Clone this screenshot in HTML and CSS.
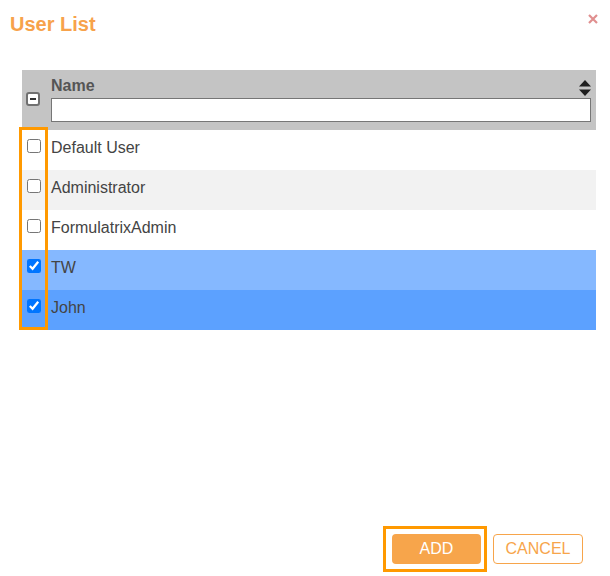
FILE: index.html
```html
<!DOCTYPE html>
<html lang="en">
<head>
    <meta charset="UTF-8">
    <meta name="viewport" content="width=device-width, initial-scale=1.0">
    <title>User List</title>
    <link rel="stylesheet" href="styles.css">
</head>
<body>

<div class="dialog">
    <header class="dialog-header">
        <h1>User List</h1>
        <button class="close-button" aria-label="Close">
            <svg width="10" height="10" viewBox="0 0 10 10">
                <path d="M1 1 L9 9 M9 1 L1 9" stroke="#e08f8f" stroke-width="2.2" fill="none"/>
            </svg>
        </button>
    </header>

    <div class="user-table">
        <div class="table-head">
            <div class="check-cell">
                <span class="fake-check"></span>
            </div>
            <div class="name-head">
                <div class="name-title">
                    <span>Name</span>
                    <svg width="12" height="16" viewBox="0 0 12 16">
                        <path d="M6 0 L12 6.5 L0 6.5 Z M0 9.5 L12 9.5 L6 16 Z" fill="#1f1f1f"/>
                    </svg>
                </div>
                <input class="name-filter" type="text">
            </div>
        </div>

        <div class="table-row">
            <div class="check-cell"><input type="checkbox"></div>
            <div class="name-cell">Default User</div>
        </div>
        <div class="table-row alt">
            <div class="check-cell"><input type="checkbox"></div>
            <div class="name-cell">Administrator</div>
        </div>
        <div class="table-row">
            <div class="check-cell"><input type="checkbox"></div>
            <div class="name-cell">FormulatrixAdmin</div>
        </div>
        <div class="table-row selected">
            <div class="check-cell"><input type="checkbox" checked></div>
            <div class="name-cell">TW</div>
        </div>
        <div class="table-row selected active">
            <div class="check-cell"><input type="checkbox" checked></div>
            <div class="name-cell">John</div>
        </div>

        <div class="column-highlight"></div>
    </div>

    <footer class="dialog-footer">
        <div class="add-wrap">
            <button class="btn btn-primary">ADD</button>
            <div class="button-highlight"></div>
        </div>
        <button class="btn btn-outline">CANCEL</button>
    </footer>
</div>

</body>
</html>
```

FILE: styles.css
```css
body {
    margin: 0;
    padding: 0;
    background-color: #ffffff;
    font-family: 'Liberation Sans', Arial, sans-serif;
    color: #444444;
}

.dialog {
    height: 576px;
    display: flex;
    flex-direction: column;
    box-sizing: border-box;
}

.dialog-header {
    display: flex;
    justify-content: space-between;
    align-items: flex-start;
    padding: 12px 12px 0 10px;
    height: 70px;
    box-sizing: border-box;
}

.dialog-header h1 {
    margin: 0;
    font-size: 20px;
    line-height: 24px;
    font-weight: bold;
    color: #f7a24b;
}

.close-button {
    border: none;
    background: none;
    padding: 0;
    margin-top: 2px;
    cursor: pointer;
    line-height: 0;
}

.user-table {
    position: relative;
    margin-left: 22px;
    width: 574px;
}

.table-head {
    display: flex;
    height: 60px;
    background-color: #c4c4c4;
}

.check-cell {
    width: 29px;
    flex-shrink: 0;
    display: flex;
    align-items: center;
    padding-left: 5px;
    box-sizing: border-box;
}

.table-head .check-cell {
    align-items: flex-start;
    padding-top: 22px;
    padding-left: 4px;
}

.fake-check {
    width: 14px;
    height: 14px;
    box-sizing: border-box;
    border: 2px solid #707070;
    border-radius: 3px;
    background-color: #ffffff;
    position: relative;
}

.fake-check::after {
    content: '';
    position: absolute;
    left: 2px;
    right: 2px;
    top: 4px;
    height: 2px;
    background-color: #333333;
}

.name-head {
    flex: 1;
    padding: 7px 5px 0 0;
}

.name-title {
    display: flex;
    justify-content: space-between;
    align-items: flex-start;
    font-size: 16px;
    line-height: 18px;
    font-weight: bold;
    color: #555555;
    height: 21px;
}

.name-title svg {
    margin-top: 3px;
}

.name-filter {
    display: block;
    width: 100%;
    height: 24px;
    box-sizing: border-box;
    border: 1px solid #767676;
    margin-top: 0;
    background-color: #ffffff;
}

.table-row {
    display: flex;
    height: 40px;
    background-color: #ffffff;
}

.table-row .check-cell {
    padding-bottom: 8px;
}

.table-row input {
    margin: 0;
    width: 14px;
    height: 14px;
}

.table-row.alt {
    background-color: #f2f2f2;
}

.table-row.selected {
    background-color: #85b8ff;
}

.table-row.selected.active {
    background-color: #5ca1ff;
}

.name-cell {
    display: flex;
    align-items: center;
    padding-bottom: 5px;
    font-size: 16px;
    color: #444444;
}

.column-highlight {
    position: absolute;
    left: -3px;
    top: 57px;
    width: 29px;
    height: 203px;
    box-sizing: border-box;
    border: 3px solid #ff9900;
}

.dialog-footer {
    margin-top: auto;
    display: flex;
    justify-content: flex-end;
    align-items: center;
    gap: 12px;
    padding: 0 27px 12px 0;
}

.add-wrap {
    position: relative;
}

.btn {
    height: 30px;
    border-radius: 4px;
    font-family: 'Liberation Sans', Arial, sans-serif;
    font-size: 16px;
    cursor: pointer;
    display: block;
}

.btn-primary {
    width: 89px;
    background-color: #f7a54b;
    border: none;
    color: #ffffff;
}

.btn-outline {
    width: 90px;
    background-color: #ffffff;
    border: 1px solid #f7a54b;
    color: #f7a54b;
}

.button-highlight {
    position: absolute;
    left: -9px;
    right: -6px;
    top: -8px;
    bottom: -8px;
    border: 3px solid #ff9900;
}
```
